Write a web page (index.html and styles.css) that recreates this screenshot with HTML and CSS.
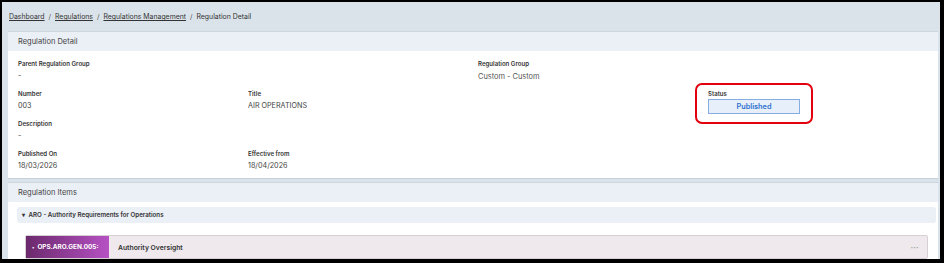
FILE: index.html
```html
<!DOCTYPE html>
<html lang="en">
<head>
  <meta charset="UTF-8">
  <meta name="viewport" content="width=device-width, initial-scale=1.0">
  <title>Regulation Detail</title>
  <link rel="stylesheet" href="styles.css">
</head>
<body>
  <div class="frame">
    <!-- Breadcrumb -->
    <nav class="breadcrumb">
      <a href="#">Dashboard</a>
      <span class="sep">/</span>
      <a href="#">Regulations</a>
      <span class="sep">/</span>
      <a href="#">Regulations Management</a>
      <span class="sep">/</span>
      <span>Regulation Detail</span>
    </nav>

    <!-- Regulation Detail -->
    <div class="card">
      <div class="card-header">Regulation Detail</div>
      <div class="card-body detail-grid">
        <div class="field">
          <div class="field-label">Parent Regulation Group</div>
          <div class="field-value">-</div>
        </div>
        <div class="field"></div>
        <div class="field">
          <div class="field-label">Regulation Group</div>
          <div class="field-value group-value">Custom - Custom</div>
        </div>
        <div class="field"></div>

        <div class="field">
          <div class="field-label">Number</div>
          <div class="field-value">003</div>
        </div>
        <div class="field">
          <div class="field-label">Title</div>
          <div class="field-value">AIR OPERATIONS</div>
        </div>
        <div class="field"></div>
        <div class="field">
          <div class="status-field">
            <div class="field-label">Status</div>
            <div class="status-badge">Published</div>
          </div>
        </div>

        <div class="field">
          <div class="field-label">Description</div>
          <div class="field-value">-</div>
        </div>
        <div class="field"></div>
        <div class="field"></div>
        <div class="field"></div>

        <div class="field">
          <div class="field-label">Published On</div>
          <div class="field-value">18/03/2026</div>
        </div>
        <div class="field">
          <div class="field-label">Effective from</div>
          <div class="field-value">18/04/2026</div>
        </div>
      </div>
    </div>

    <!-- Regulation Items -->
    <div class="card items-card">
      <div class="card-header">Regulation Items</div>
      <div class="items-body">
        <div class="group-row"><span class="caret">&#9662;</span> ARO - Authority Requirements for Operations</div>
        <div class="item-row">
          <div class="item-code"><span class="bullet">&#8226;</span> OPS.ARO.GEN.005:</div>
          <div class="item-title">Authority Oversight</div>
          <div class="item-menu">&bull;&bull;&bull;</div>
        </div>
      </div>
    </div>
  </div>
</body>
</html>
```

FILE: styles.css
```css
body {
  margin: 0;
  background: #000;
  font-family: Inter, "Liberation Sans", sans-serif;
  color: #333;
}
.frame {
  margin: 2px 4px 0 2px;
  height: 257px;
  background: #dbe3ea;
  overflow: hidden;
}
.breadcrumb {
  height: 29px;
  display: flex;
  align-items: center;
  gap: 4px;
  padding-left: 7px;
  font-size: 6.9px;
  color: #333;
}
.breadcrumb a {
  color: #333;
  text-decoration: underline;
}
.breadcrumb .sep {
  color: #555;
}
.card {
  background: #fff;
  margin: 0 2px 0 6px;
  border-top: 1px solid #cdd6df;
  border-bottom: 1px solid #c6d0da;
}
.card-header {
  height: 19px;
  line-height: 19px;
  background: #ebeff6;
  padding-left: 10px;
  font-size: 7.5px;
  color: #444;
}
.detail-grid {
  display: grid;
  grid-template-columns: repeat(4, 1fr);
  padding: 7px 0 0 10px;
}
.field {
  height: 30px;
}
.field-label {
  font-size: 6.1px;
  font-weight: 600;
  line-height: 12px;
  color: #333;
}
.field-value {
  font-size: 7.2px;
  line-height: 12px;
  color: #444;
}
.group-value {
  font-size: 7.4px;
  line-height: 14px;
  color: #555;
}
.status-field {
  position: relative;
  width: 92px;
}
.status-field::before {
  content: "";
  position: absolute;
  top: -5px;
  left: -13px;
  right: -13px;
  bottom: -10px;
  border: 2.5px solid #e3000f;
  border-radius: 7px;
}
.status-badge {
  height: 13px;
  line-height: 13px;
  margin-top: -1px;
  text-align: center;
  background: #e6effa;
  border: 1px solid #86ade2;
  font-size: 7.3px;
  font-weight: 600;
  color: #2e6fd0;
}
.items-card {
  margin-top: 3px;
  border-bottom: none;
}
.items-body {
  padding: 5px 2px 0 9px;
  height: 60px;
}
.group-row {
  height: 16px;
  line-height: 16px;
  background: #ebeff6;
  border-radius: 3px;
  padding-left: 5px;
  font-size: 6.2px;
  font-weight: 600;
  color: #333;
}
.caret {
  font-size: 6px;
  margin-right: 2px;
}
.item-row {
  display: flex;
  align-items: center;
  height: 22px;
  margin: 12px 8px 0 8px;
  background: #efe9ee;
  border: 1px solid #d6d0d4;
  border-radius: 2px;
}
.item-code {
  width: 77px;
  height: 100%;
  display: flex;
  align-items: center;
  padding-left: 6px;
  background: linear-gradient(90deg, #6b2a6c, #b651c4);
  color: #fff;
  font-size: 6.4px;
  font-weight: 700;
  white-space: nowrap;
}
.item-code .bullet {
  font-size: 5px;
  margin-right: 3px;
}
.item-title {
  flex: 1;
  padding-left: 9px;
  font-size: 6.8px;
  font-weight: 600;
  color: #333;
}
.item-menu {
  padding-right: 8px;
  font-size: 4px;
  color: #999;
  letter-spacing: 0.5px;
}
```
